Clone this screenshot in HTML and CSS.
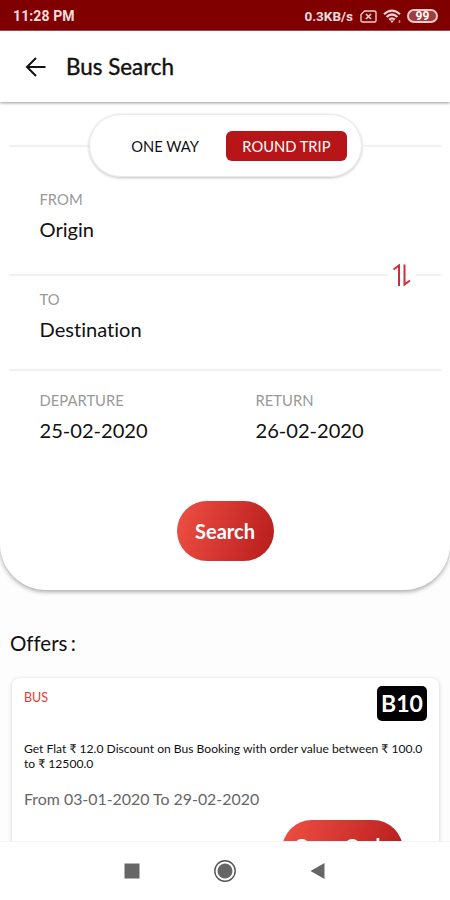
FILE: index.html
```
<!DOCTYPE html>
<html lang="en">
<head>
    <meta charset="UTF-8">
    <meta name="viewport" content="width=device-width, initial-scale=1.0">
    <title>Bus Search</title>
    <link rel="stylesheet" href="styles.css">
</head>
<body>
    <div class="status-bar">
        <span class="clock">11:28 PM</span>
        <span class="speed">0.3KB/s</span>
        <svg class="sim" width="17" height="13" viewBox="0 0 17 13" fill="none" stroke="#eecaca" stroke-width="1.4">
            <path d="M4.5 1H14.5Q16 1 16 2.500V10.500Q16 12 14.500 12H2.500Q1 12 1 10.500V4.500Z"/>
            <path d="M6 4L11 9M11 4L6 9" stroke-width="1.700"/>
        </svg>
        <svg class="wifi" width="19" height="15" viewBox="0 0 19 15" fill="none" stroke="#f0d0d0" stroke-width="2.200">
            <path d="M1 5.200Q9 -2 17 5.200M3.600 8Q9 3 14.400 8M6.200 10.600Q9 8 11.800 10.600"/>
            <path d="M7 11.500L9 14L11 11.500Z" fill="#f0d0d0" stroke="none"/>
            <path d="M16.500 11V14" stroke="#d08050" stroke-width="1.500"/>
        </svg>
        <span class="battery">99</span>
    </div>

    <header class="header">
        <svg width="22" height="22" viewBox="0 0 22 22" fill="none" stroke="#111" stroke-width="2">
            <path d="M20.500 11H2.500M11 2L2 11L11 20"/>
        </svg>
        <h1>Bus Search</h1>
    </header>

    <main class="content">
        <section class="search-panel">
            <div class="trip-row">
                <span class="line"></span>
                <div class="trip-toggle">
                    <span class="trip">ONE WAY</span>
                    <span class="trip active">ROUND TRIP</span>
                </div>
                <span class="line"></span>
            </div>

            <div class="field from">
                <label>FROM</label>
                <p>Origin</p>
            </div>

            <div class="swap-row">
                <span class="line"></span>
                <svg width="18" height="24" viewBox="0 0 18 24" fill="none" stroke="#c9303a" stroke-width="2">
                    <path d="M.500 6.500L6 2.500V23M11.500 1.500V21.500L17 17.500"/>
                </svg>
                <span class="line"></span>
            </div>

            <div class="field to">
                <label>TO</label>
                <p>Destination</p>
            </div>

            <div class="dates">
                <div class="field">
                    <label>DEPARTURE</label>
                    <p>25-02-2020</p>
                </div>
                <div class="field">
                    <label>RETURN</label>
                    <p>26-02-2020</p>
                </div>
            </div>

            <button class="btn search-btn">Search</button>
        </section>

        <h2>Offers :</h2>

        <section class="offer">
            <div class="offer-top">
                <span class="type">BUS</span>
                <span class="code">B10</span>
            </div>
            <p class="text">Get Flat ₹ 12.0 Discount on Bus Booking with order value between ₹ 100.0<br>to ₹ 12500.0</p>
            <p class="valid">From 03-01-2020 To 29-02-2020</p>
            <button class="btn copy-btn">Copy Code</button>
        </section>
    </main>

    <nav class="nav-bar">
        <svg width="16" height="16" viewBox="0 0 16 16">
            <rect x=".500" y=".500" width="15" height="15" fill="#666"/>
        </svg>
        <svg width="24" height="24" viewBox="0 0 24 24">
            <circle cx="12" cy="12" r="10.200" fill="none" stroke="#555" stroke-width="1.400"/>
            <circle cx="12" cy="12" r="7.500" fill="#666"/>
        </svg>
        <svg width="16" height="18" viewBox="0 0 16 18">
            <path d="M14.500 1V17L.500 9Z" fill="#666"/>
        </svg>
    </nav>
</body>
</html>
```
FILE: styles.css
```
* {
    box-sizing: border-box;
}

body {
    margin: 0;
    height: 900px;
    display: flex;
    flex-direction: column;
    overflow: hidden;
    background: #fdfdfd;
    color: #111;
    font-family: Lato, "Liberation Sans", sans-serif;
    font-variant-ligatures: none;
}

h1, h2, p {
    margin: 0;
    font-weight: normal;
}

/* Status bar */
.status-bar {
    flex: none;
    height: 31px;
    padding: 2px 12px 0 13px;
    display: flex;
    align-items: center;
    background: #800000;
    border-bottom: 1px solid #a85050;
    color: #f6dede;
    font-family: Roboto, sans-serif;
    font-size: 14px;
    font-weight: bold;
}

.clock {
    letter-spacing: 0.1px;
}

.speed {
    margin-left: auto;
    font-size: 13.5px;
}

.sim {
    margin-left: 7px;
}

.wifi {
    margin-left: 6px;
}

.battery {
    width: 31px;
    height: 14px;
    margin-left: 5px;
    border: 2px solid #eecaca;
    border-radius: 7px;
    background: #a03c3c;
    color: #fff;
    font-size: 12px;
    line-height: 10px;
    text-align: center;
}

/* Header */
.header {
    flex: none;
    height: 71px;
    padding-left: 25px;
    display: flex;
    align-items: center;
    gap: 19px;
    background: #fff;
    box-shadow: 0 1px 3px rgba(0, 0, 0, 0.4);
    z-index: 1;
}

.header h1 {
    font-size: 22.4px;
    -webkit-text-stroke: 0.4px #111;
}

.content {
    flex: 1;
    min-height: 0;
    overflow: hidden;
}

/* Search form */
.search-panel {
    height: 488px;
    padding-top: 12px;
    display: flex;
    flex-direction: column;
    background: #fff;
    border-radius: 0 0 46px 46px;
    box-shadow: 0 2px 4px rgba(0, 0, 0, 0.33);
}

.line {
    flex: 1;
    height: 2px;
    background: #f1f1f1;
}

.trip-row {
    padding: 0 9px;
    display: flex;
    align-items: center;
}

.trip-row .line:last-child {
    flex: none;
    width: 79px;
}

.trip-toggle {
    width: 273px;
    height: 63px;
    padding-right: 14px;
    display: flex;
    align-items: center;
    justify-content: flex-end;
    gap: 11px;
    border: 1px solid #e8e8e8;
    border-radius: 32px;
    box-shadow: 0 1px 3px rgba(0, 0, 0, 0.25);
}

.trip {
    height: 30px;
    padding: 0 16px;
    border-radius: 6px;
    font-size: 14.7px;
    line-height: 30px;
}

.trip.active {
    padding: 0 16.5px;
    background: #b71518;
    color: #fff;
}

.field label {
    display: block;
    color: #999;
    font-size: 14.8px;
    line-height: 18px;
}

.field p {
    margin-top: 9px;
    font-size: 20.1px;
    line-height: 24px;
}

.from {
    padding: 13px 39.5px 0;
}

.swap-row {
    height: 24px;
    margin-top: 22px;
    padding: 0 9px;
    display: flex;
    align-items: center;
    gap: 5px;
}

.swap-row .line:last-child {
    flex: none;
    width: 25px;
}

.to {
    margin: 0 9px;
    padding: 3px 30.5px 28px;
    border-bottom: 2px solid #f1f1f1;
}

.dates {
    padding: 20px 39.5px 0;
    display: grid;
    grid-template-columns: 216px 1fr;
}

.btn {
    padding: 0;
    border: none;
    background: linear-gradient(105deg, #ef5044, #b71c1c);
    color: #fff;
    font-family: inherit;
    font-size: 20px;
    font-weight: bold;
}

.search-btn {
    width: 97px;
    height: 60px;
    margin: 59px auto 0;
    border-radius: 30px;
}

/* Offers */
h2 {
    padding: 40px 10px 0;
    font-size: 20.5px;
    line-height: 26px;
    word-spacing: -2px;
}

.offer {
    height: 210px;
    margin: 22px 11px 0 12px;
    padding: 8px 12px;
    display: flex;
    flex-direction: column;
    background: #fff;
    border-radius: 8px;
    box-shadow: 0 1px 4px rgba(0, 0, 0, 0.2);
}

.offer-top {
    display: flex;
    justify-content: space-between;
}

.type {
    margin-top: 4px;
    color: #e53935;
    font-size: 12.5px;
    line-height: 16px;
}

.code {
    width: 50px;
    height: 35px;
    border-radius: 5px;
    background: #000;
    color: #fff;
    font-size: 23px;
    font-weight: bold;
    line-height: 35px;
    text-align: center;
}

.text {
    margin-top: 20px;
    font-size: 12.1px;
    line-height: 15px;
    white-space: nowrap;
}

.valid {
    margin-top: 18px;
    color: #666;
    font-size: 15.9px;
    line-height: 20px;
}

.copy-btn {
    flex: none;
    width: 121px;
    height: 60px;
    margin: 11px 24px 0 auto;
    padding-bottom: 9px;
    border-radius: 30px;
}

/* Android navigation */
.nav-bar {
    flex: none;
    height: 59px;
    padding-left: 124px;
    display: flex;
    align-items: center;
    gap: 73px;
    background: #fff;
    border-top: 1px solid #f3f3f3;
}
```
